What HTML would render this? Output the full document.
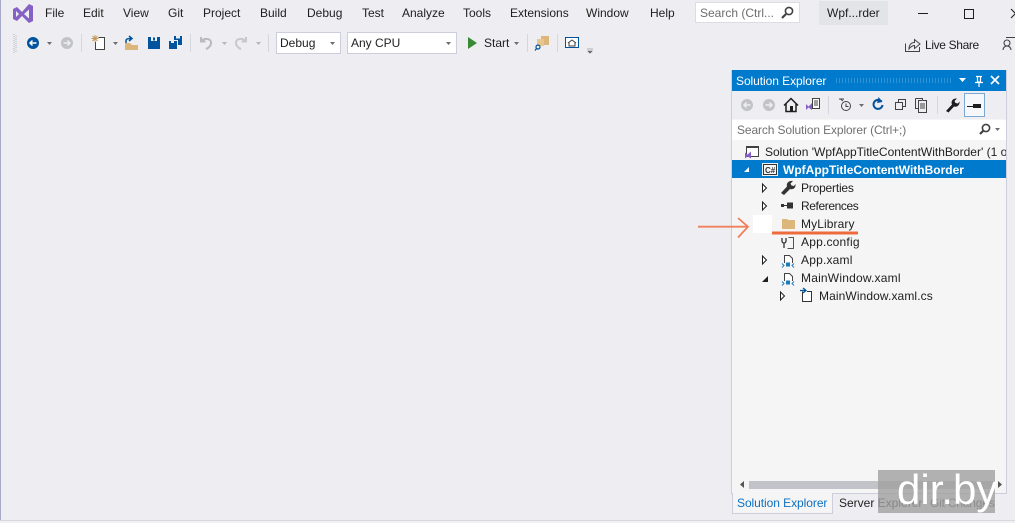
<!DOCTYPE html>
<html><head><meta charset="utf-8"><style>
html,body{margin:0;padding:0;width:1015px;height:523px;overflow:hidden;background:#eeeef2;font-family:"Liberation Sans",sans-serif;font-size:12px;color:#1e1e1e}
.t{position:absolute;white-space:nowrap;line-height:16px}
.b{position:absolute}
svg{position:absolute;left:0;top:0}
</style></head><body>
<div class="b" style="left:0;top:0;width:1px;height:523px;background:#a9a9c9"></div>

<span class="t" style="left:45px;top:5px">File</span>
<span class="t" style="left:83px;top:5px">Edit</span>
<span class="t" style="left:123px;top:5px">View</span>
<span class="t" style="left:168px;top:5px">Git</span>
<span class="t" style="left:203px;top:5px">Project</span>
<span class="t" style="left:260px;top:5px">Build</span>
<span class="t" style="left:307px;top:5px">Debug</span>
<span class="t" style="left:362px;top:5px">Test</span>
<span class="t" style="left:402px;top:5px">Analyze</span>
<span class="t" style="left:463px;top:5px">Tools</span>
<span class="t" style="left:510px;top:5px">Extensions</span>
<span class="t" style="left:586px;top:5px">Window</span>
<span class="t" style="left:650px;top:5px">Help</span>

<div class="b" style="left:695px;top:2px;width:105px;height:21px;background:#fff;border:1px solid #dcdce4;box-sizing:border-box"></div>
<span class="t" style="left:700px;top:5px;color:#6d6d6d">Search (Ctrl...</span>
<div class="b" style="left:819px;top:1px;width:69px;height:24px;background:#e2e4e8"></div>
<span class="t" style="left:827px;top:5px">Wpf...rder</span>

<div class="b" style="left:276px;top:32px;width:65px;height:22px;background:#fff;border:1px solid #cccedb;box-sizing:border-box"></div>
<span class="t" style="left:280px;top:35px">Debug</span>
<div class="b" style="left:347px;top:32px;width:110px;height:22px;background:#fff;border:1px solid #cccedb;box-sizing:border-box"></div>
<span class="t" style="left:351px;top:35px">Any CPU</span>
<span class="t" style="left:484px;top:35px">Start</span>
<span class="t" style="left:925px;top:37px;letter-spacing:-.35px">Live Share</span>

<!-- Solution Explorer panel -->
<div class="b" style="left:731px;top:70px;width:276px;height:424px;background:#f5f5f5;border:1px solid #cccedb;border-top:0;box-sizing:border-box"></div>
<div class="b" style="left:732px;top:70px;width:274px;height:21px;background:#007acc"></div>
<span class="t" style="left:736px;top:73px;color:#fff;letter-spacing:-.06px">Solution Explorer</span>
<div class="b" style="left:836px;top:78px;width:115px;height:5px;background:repeating-linear-gradient(90deg,#2f93d6 0 1px,transparent 1px 3px)"></div>
<div class="b" style="left:732px;top:91px;width:274px;height:28px;background:#eeeef2"></div>
<div class="b" style="left:964px;top:93px;width:21px;height:24px;background:#f5f7fa;border:1px solid #79a9d3;box-sizing:border-box"></div>
<div class="b" style="left:732px;top:120px;width:274px;height:20px;background:#fff"></div>
<span class="t" style="left:737px;top:122px;color:#717171;letter-spacing:-.12px">Search Solution Explorer (Ctrl+;)</span>

<div class="b" style="left:732px;top:160px;width:274px;height:18px;background:#007acc"></div>
<div class="b" style="left:753px;top:215px;width:19px;height:18px;background:#fff"></div>

<div class="b" style="left:732px;top:142px;width:274px;height:18px;overflow:hidden"><span class="t" style="left:33px;top:2px">Solution 'WpfAppTitleContentWithBorder' (1 of 1 project)</span></div>
<span class="t" style="left:783px;top:162px;color:#fff;font-weight:bold">WpfAppTitleContentWithBorder</span>
<span class="t" style="left:801px;top:180px;letter-spacing:-.2px">Properties</span>
<span class="t" style="left:801px;top:198px;letter-spacing:-.4px">References</span>
<span class="t" style="left:801px;top:216px;letter-spacing:.1px">MyLibrary</span>
<span class="t" style="left:801px;top:234px;letter-spacing:.2px">App.config</span>
<span class="t" style="left:801px;top:252px;letter-spacing:.2px">App.xaml</span>
<span class="t" style="left:801px;top:270px;letter-spacing:.2px">MainWindow.xaml</span>
<span class="t" style="left:819px;top:288px;letter-spacing:.1px">MainWindow.xaml.cs</span>

<!-- scrollbar -->
<div class="b" style="left:749px;top:481px;width:245px;height:8px;background:#c2c3c9"></div>

<!-- tabs -->
<div class="b" style="left:732px;top:493px;width:101px;height:21px;background:#f5f5f5;border:1px solid #cccedb;border-top:0;box-sizing:border-box"></div>
<div class="b" style="left:833px;top:493px;width:174px;height:1px;background:#cccedb"></div>
<span class="t" style="left:737px;top:495px;color:#0e70c0;letter-spacing:-.06px">Solution Explorer</span>
<span class="t" style="left:839px;top:495px">Server Explorer</span>
<span class="t" style="left:930px;top:495px;color:#444;letter-spacing:-.2px">Git Changes</span>
<div class="b" style="left:0;top:520px;width:1015px;height:3px;background:#f1f1f4;border-top:1px solid #d8d8de;box-sizing:border-box"></div>

<svg width="1015" height="523" viewBox="0 0 1015 523">
<!-- VS logo -->
<path d="M13 9 L17 7 L22 12 L29 4 L33 6 V21 L29 23 L22 16 L17 21 L13 19 Z M16 11 V17 L19 14 Z M29 9.5 L24 14 L29 18.5 Z" fill="#8661c5" fill-rule="evenodd"/>
<!-- window controls -->
<path d="M918 13.500H928" stroke="#1e1e1e" stroke-width="1"/>
<rect x="964.500" y="9.500" width="9" height="9" fill="none" stroke="#1e1e1e"/>
<path d="M1011 9L1020 18M1020 9L1011 18" stroke="#1e1e1e"/>
<!-- search title -->
<circle cx="789" cy="11" r="3.600" fill="none" stroke="#424242" stroke-width="1.600"/>
<path d="M786 14L782 18" stroke="#424242" stroke-width="2.200"/>

<!-- toolbar grip -->
<path d="M14 34V53M16 35V53" stroke="#b4b4bf" stroke-width="1" stroke-dasharray="1 1"/>
<!-- back -->
<circle cx="33" cy="43" r="6" fill="#00539c"/>
<path d="M36.500 43H30M32.500 40.500L30 43L32.500 45.500" stroke="#fff" stroke-width="1.500" fill="none"/>
<path d="M47 42h5l-2.500 3z" fill="#6d6d70"/>
<circle cx="67" cy="43" r="6" fill="#c2c3c9"/>
<path d="M63.500 43H70M67.500 40.500L70 43L67.500 45.500" stroke="#eeeef2" stroke-width="1.500" fill="none"/>
<path d="M81.500 34V52M190.500 34V52M268.500 34V52M527.500 34V52M557.500 34V52" stroke="#d6d6dd"/>
<!-- new project -->
<path d="M98.500 37.500H104.500V49.500H95.500V42" fill="#fff" stroke="#424242"/>
<path d="M95 35V42M91.500 38.500H98.500M92.500 36L97.500 41M97.500 36L92.500 41" stroke="#c69a56" stroke-width="1"/>
<path d="M113 42h5l-2.500 3z" fill="#6d6d70"/>
<!-- open -->
<path d="M125 43H130L132 45H138V50H125Z" fill="#dcb67a"/>
<path d="M126 43V40.500C126 39 127.500 38.500 131 38.500M129 36L132 38.500L129 41" stroke="#00539c" stroke-width="1.500" fill="none"/>
<!-- save -->
<path d="M148 37H160V49H148Z" fill="#00539c"/>
<rect x="151" y="37" width="6" height="4" fill="#eeeef2"/>
<rect x="153" y="37.500" width="2" height="3" fill="#00539c"/>
<rect x="151" y="45" width="6" height="4" fill="#00539c"/>
<!-- save all -->
<path d="M169 41H177V49H169Z" fill="#00539c"/>
<path d="M174 36H182V45H178V40H174Z" fill="#00539c"/>
<rect x="176" y="36" width="4" height="2.500" fill="#eeeef2"/>
<rect x="171" y="41" width="3" height="2" fill="#eeeef2"/>
<!-- undo/redo -->
<path d="M201 37V41.500H205.500M201.500 41C204 38 210 38 211 42C211.500 45 209 48 206 49" fill="none" stroke="#b9b9c0" stroke-width="2"/>
<path d="M222 42h5l-2.500 3z" fill="#b5b5bb"/>
<path d="M246 37V41.500H241.500M245.500 41C243 38 237 38 236 42C235.500 45 238 48 241 49" fill="none" stroke="#c8c8ce" stroke-width="2"/>
<path d="M256 42h5l-2.500 3z" fill="#b5b5bb"/>
<!-- combos -->
<path d="M330 42h5l-2.500 3z" fill="#6d6d70"/>
<path d="M446 42h5l-2.500 3z" fill="#6d6d70"/>
<!-- start -->
<path d="M468 37L477 43L468 49Z" fill="#388a34"/>
<path d="M514 42h5l-2.500 3z" fill="#6d6d70"/>
<!-- find -->
<rect x="541" y="36" width="8" height="9" fill="#dcb67a"/>
<rect x="537" y="39" width="7" height="7" fill="#e8c68f"/>
<circle cx="538" cy="47" r="2" fill="none" stroke="#00539c" stroke-width="1.200"/>
<path d="M536.500 48.500L535 50.500" stroke="#00539c" stroke-width="1.200"/>
<!-- browser home -->
<rect x="565.500" y="37.500" width="13" height="10" fill="#fff" stroke="#00539c"/>
<path d="M568 43L572 40L576 43M569 42.500V46H575V42.500" fill="none" stroke="#424242"/>
<path d="M587 49h6M587.500 51h5l-2.500 2.500z" fill="#6d6d70" stroke="#6d6d70" stroke-width=".5"/>
<!-- Live share -->
<path d="M905.500 43.500V51.500H919.500V47" fill="none" stroke="#424242"/>
<path d="M909 49C909 44 912 42.500 914.500 42.500V39.500L920 44L914.500 48.500V45.500C912 45.500 910.500 47 909 49Z" fill="#eeeef2" stroke="#424242"/>
<circle cx="1007" cy="43" r="3" fill="none" stroke="#424242" stroke-width="1.100"/>
<path d="M1003 50C1003 47.500 1005 46 1007 46C1009 46 1011 47.500 1011 50" fill="none" stroke="#424242" stroke-width="1.100"/>
<path d="M1006 37.500H1015" stroke="#424242"/>

<!-- SE title icons -->
<path d="M959 78h7l-3.500 4z" fill="#fff"/>
<path d="M976 76.500H982M977.500 76.500V82H980.500V76.500M975 82.500H983M979 83V87" fill="none" stroke="#fff" stroke-width="1.200"/>
<path d="M991 76L999 84M999 76L991 84" stroke="#fff" stroke-width="1.700"/>

<!-- SE toolbar -->
<circle cx="747" cy="105" r="6" fill="#c2c3c9"/>
<path d="M750.500 105H744M746.500 102.500L744 105L746.500 107.500" stroke="#eeeef2" stroke-width="1.500" fill="none"/>
<circle cx="769" cy="105" r="6" fill="#c2c3c9"/>
<path d="M765.500 105H772M769.500 102.500L772 105L769.500 107.500" stroke="#eeeef2" stroke-width="1.500" fill="none"/>
<path d="M784 105.500L791 98.500L798 105.500M786 104V111.500H796V104" fill="none" stroke="#1e1e1e" stroke-width="1.500"/>
<rect x="790" y="106" width="3" height="5" fill="#1e1e1e"/>
<rect x="812.500" y="98.500" width="7" height="10" fill="#fff" stroke="#424242"/>
<path d="M814 101H818M814 103H818M814 105H818" stroke="#424242"/>
<path d="M806 104L808.500 106.500L812 103V110L808.500 107.500L806 110Z" fill="#8661c5"/>
<path d="M828.500 96V114M937.500 96V114" stroke="#d6d6dd"/>
<path d="M839 99H844M840.500 99L843 101" stroke="#424242"/>
<circle cx="846" cy="106" r="4.500" fill="none" stroke="#424242"/>
<path d="M846 103.500V106.500H848.500" fill="none" stroke="#424242"/>
<path d="M859 104h5l-2.500 3z" fill="#6d6d70"/>
<path d="M881.500 101.500A4.500 4.500 0 1 0 882.500 105" fill="none" stroke="#00539c" stroke-width="2"/>
<path d="M878.500 97L882.500 102L877 103Z" fill="#00539c"/>
<rect x="895.500" y="102.500" width="7" height="7" fill="#eeeef2" stroke="#424242"/>
<path d="M898.500 102.500V99.500H905.500V106.500H902.500" fill="none" stroke="#424242"/>
<path d="M915.500 98.500H922.500V100.500M922.500 100.500H926.500V112.500H918.500V100.500H922" fill="#eeeef2" stroke="#424242"/>
<path d="M915.500 98.500V108.500H918" fill="none" stroke="#424242"/>
<path d="M920 104H925M920 106H925M920 108H925" stroke="#424242"/>
<path d="M946 111L952 104.500C950.500 101 953 98 957 98.500L954.500 101L955.500 103L958 103.500L959.500 101.500C960 105 957 107.500 954 106.500L948.500 112.500Z" fill="#1e1e1e"/>
<path d="M967 106.500H973" stroke="#1e1e1e"/>
<rect x="973" y="104" width="8" height="4" fill="#1e1e1e"/>

<!-- search se -->
<circle cx="986" cy="128" r="3.600" fill="none" stroke="#424242" stroke-width="1.600"/>
<path d="M983.500 130.500L980 134" stroke="#424242" stroke-width="2.200"/>
<path d="M995 128h5l-2.500 3z" fill="#6d6d70"/>

<!-- tree icons -->
<rect x="746.500" y="146.500" width="12" height="10" fill="#fff" stroke="#424242"/>
<rect x="747" y="146" width="12" height="2" fill="#424242"/>
<path d="M745 152.500L747.500 154.500L751 151.500V158.500L747.500 156.500L745 158.500Z" fill="#8661c5"/>
<path d="M744 172h5v-5z" fill="#fff"/>
<rect x="762" y="163" width="16" height="13" fill="#e8f1f8"/>
<rect x="763.500" y="164.500" width="13" height="10" fill="#f5f5f5" stroke="#333"/>
<text x="765" y="173" font-size="8" font-weight="bold" font-family="Liberation Sans" fill="#333">C#</text>
<path d="M762.500 184L766.500 188L762.500 192Z" fill="#fff" stroke="#1e1e1e"/>
<path d="M762.500 202L766.500 206L762.500 210Z" fill="#fff" stroke="#1e1e1e"/>
<path d="M762.500 256L766.500 260L762.500 264Z" fill="#fff" stroke="#1e1e1e"/>
<path d="M762 282h6v-6z" fill="#1e1e1e"/>
<path d="M780.500 292L784.500 296L780.500 300Z" fill="#fff" stroke="#1e1e1e"/>
<!-- wrench -->
<path d="M781 193L787 186.500C786 183 789 180.500 793 181L790.500 183.500L791.500 185.500L794 186L795.500 184C796 188 793 190 790 189L784 195Z" fill="#333"/>
<!-- references -->
<rect x="781" y="204" width="3" height="3" fill="#333"/>
<path d="M784 205.500H787" stroke="#333"/>
<rect x="787" y="202.500" width="6" height="6" fill="#333"/>
<!-- folder -->
<path d="M782 219H787L788 220H795V229H782Z" fill="#dcb67a"/>
<!-- app.config -->
<path d="M782 238V241A2 2 0 0 0 786 241V238M784 243V248" fill="none" stroke="#333" stroke-width="1.300"/>
<path d="M788.500 237.500H793.500V248.500H787.500" fill="none" stroke="#555"/>
<!-- xaml -->
<path d="M784.500 263V255.500H789.500L792.500 258.500V263" fill="#fff" stroke="#444"/>
<path d="M782 263.500L784 265.500L782 267.500M794 263.500L792 265.500L794 267.500" fill="none" stroke="#1c7cb8"/>
<rect x="786" y="262.500" width="4" height="4" fill="#1c7cb8"/>
<path d="M784.500 281V273.500H789.500L792.500 276.500V281" fill="#fff" stroke="#444"/>
<path d="M782 281.500L784 283.500L782 285.500M794 281.500L792 283.500L794 285.500" fill="none" stroke="#1c7cb8"/>
<rect x="786" y="280.500" width="4" height="4" fill="#1c7cb8"/>
<!-- cs -->
<path d="M802.500 291.500V301.500H811.500V291.500H807" fill="#fff" stroke="#333"/>
<path d="M800 290.500H805M803 288L806 290.500L803 293" fill="none" stroke="#00539c" stroke-width="1.300"/>

<!-- annotation -->
<path d="M698 226.700H747M738 218L748 226.700L738 237.500" fill="none" stroke="#f0805c" stroke-width="1.800"/>
<path d="M772 233H858" stroke="#ee6a3c" stroke-width="3"/>

<!-- scroll arrows -->
<path d="M744 481V488L740 484.500Z" fill="#555"/>
<path d="M998 481V488L1002 484.500Z" fill="#555"/>
</svg>

<!-- watermark -->
<div class="b" style="left:878px;top:470px;width:117px;height:43px;background:rgba(160,160,160,.8)"></div>
<div class="t" style="left:897px;top:466px;font-size:42px;line-height:48px;color:#fff">dir.by</div>
</body></html>
